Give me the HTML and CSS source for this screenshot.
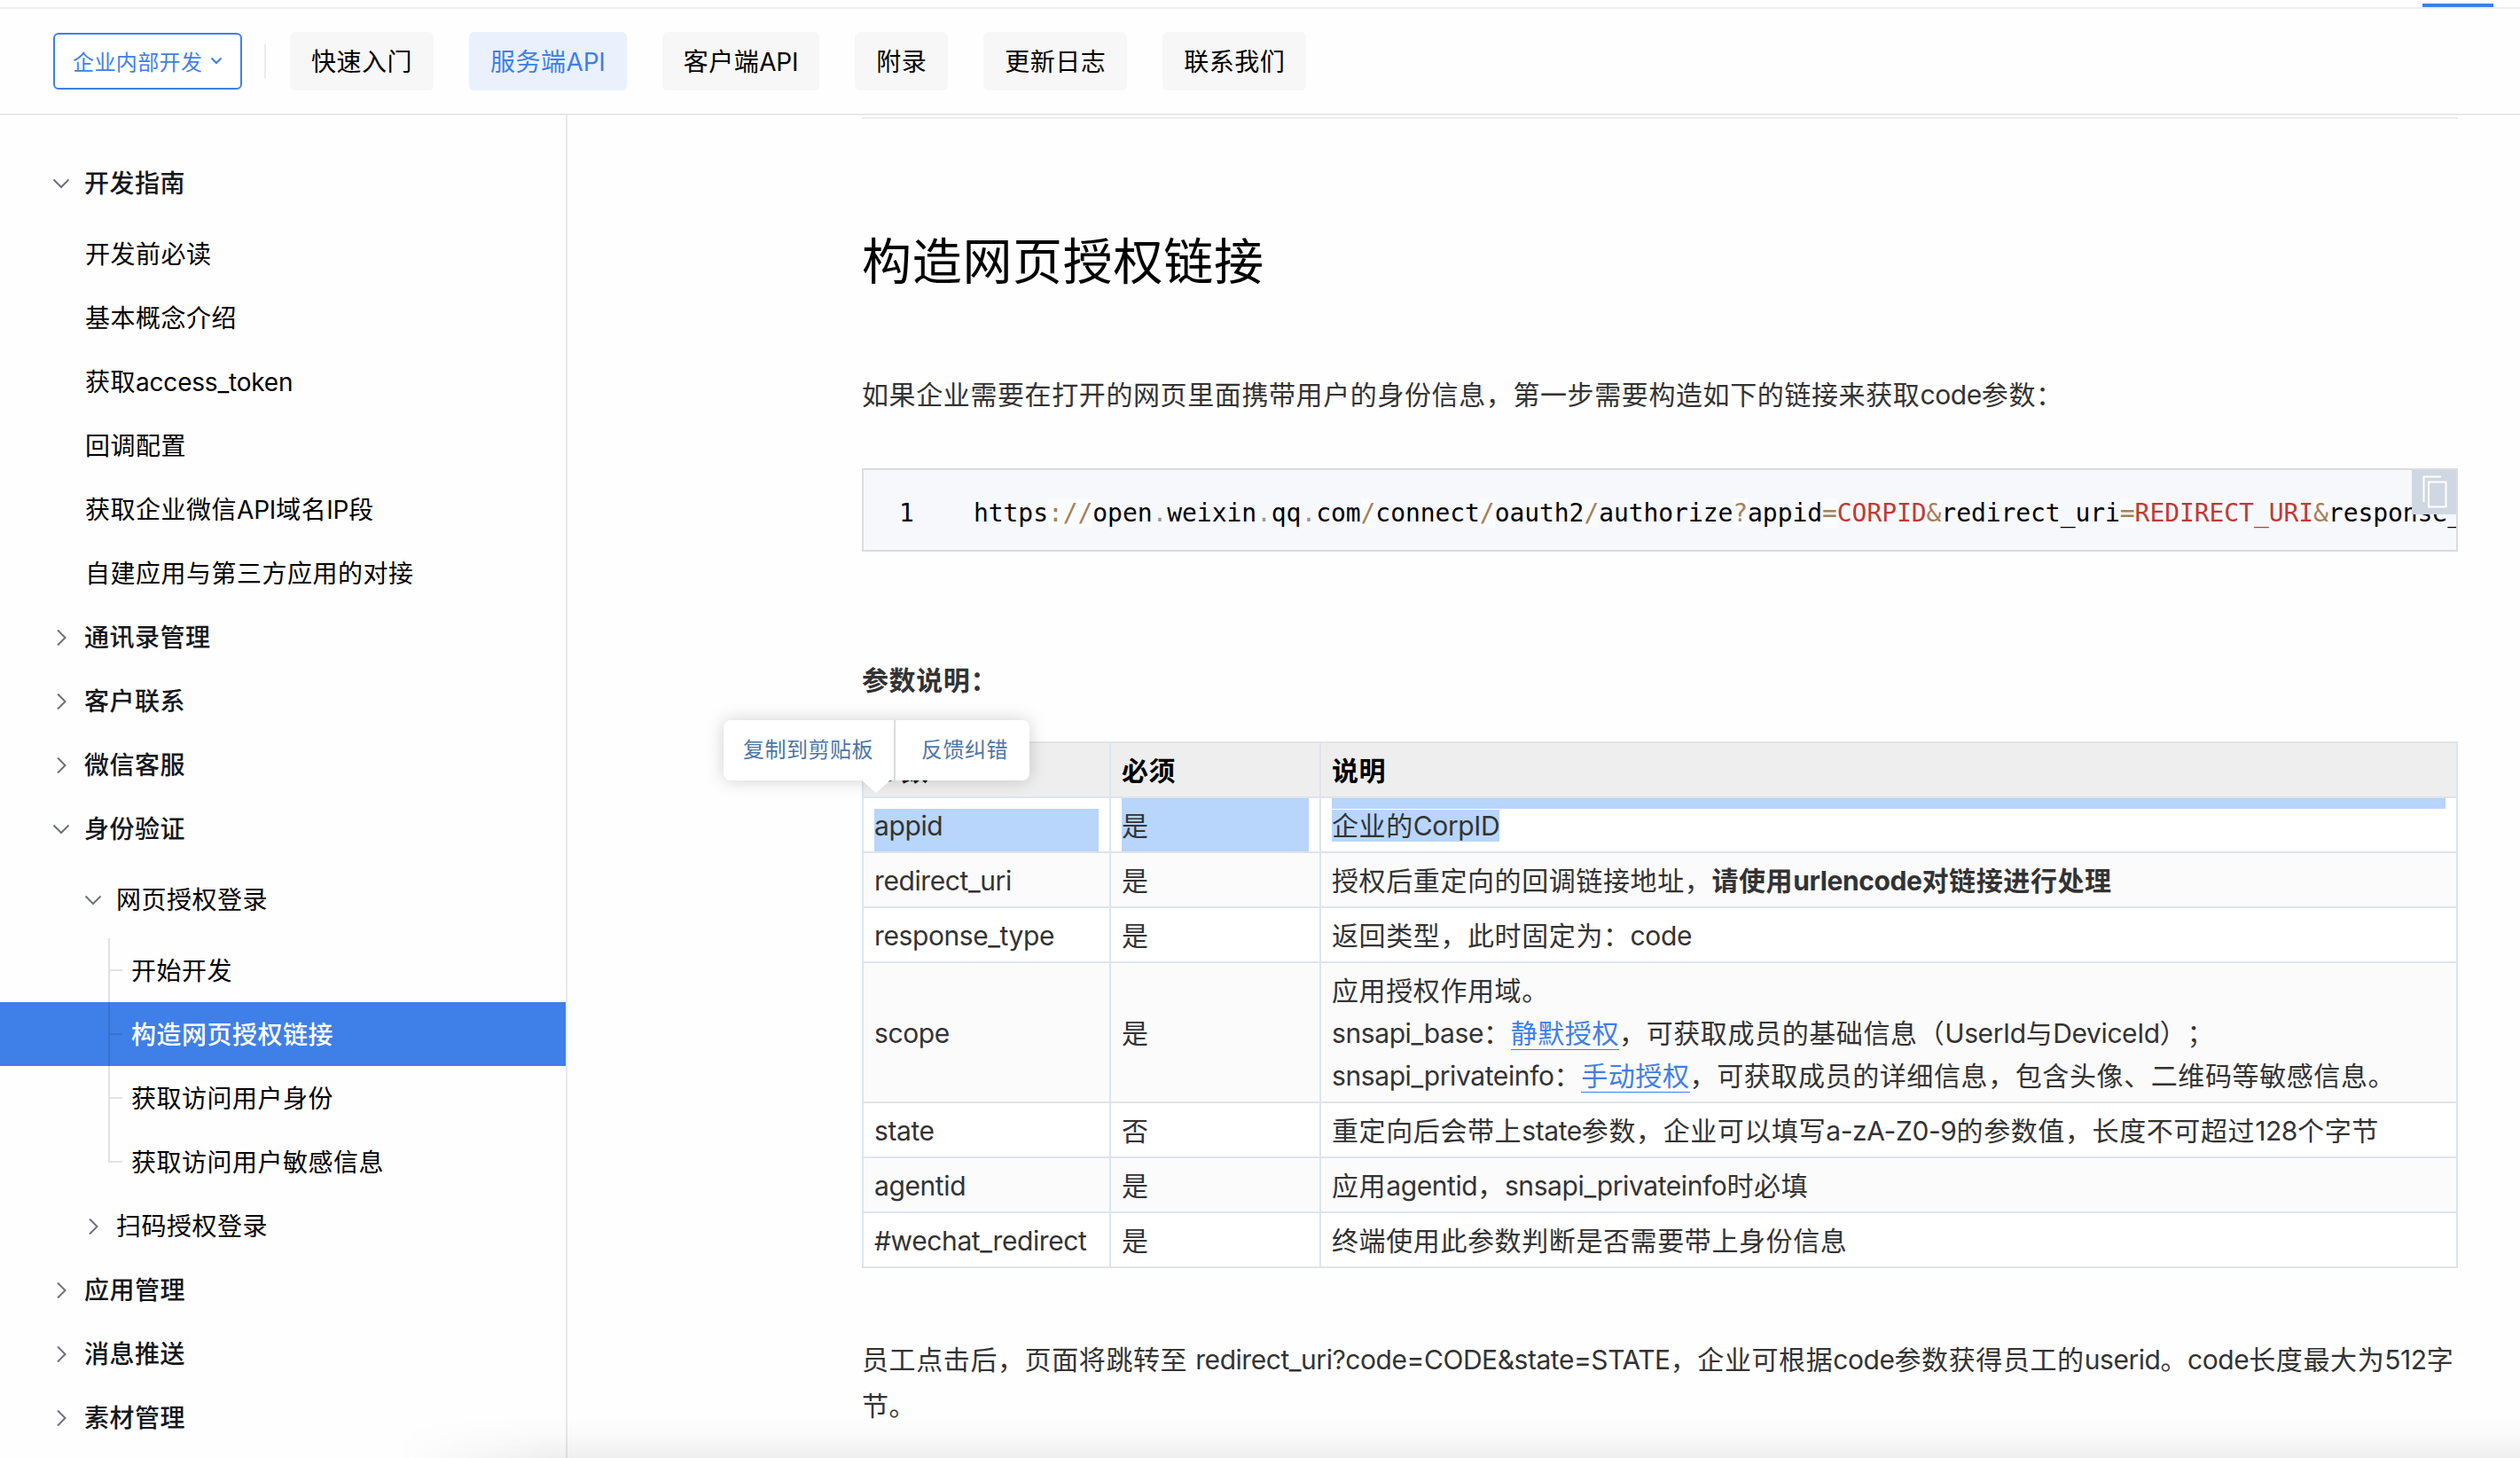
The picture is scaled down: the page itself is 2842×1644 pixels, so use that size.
FILE: index.html
```html
<!DOCTYPE html>
<html lang="zh-CN">
<head>
  <meta charset="UTF-8">
  <meta name="viewport" content="width=device-width, initial-scale=1.0">
  <title>构造网页授权链接</title>
  <link rel="stylesheet" href="styles.css">
</head>
<body>
  <div class="topbar"><span class="topbar-active"></span></div>

  <nav class="nav">
    <button class="nav-select">企业内部开发
      <svg width="14" height="9" viewBox="0 0 14 9"><path d="M1.500 1.500 7 7l5.500-5.500"/></svg>
    </button>
    <span class="nav-divider"></span>
    <a class="nav-item">快速入门</a>
    <a class="nav-item active">服务端<span class="en">API</span></a>
    <a class="nav-item">客户端<span class="en">API</span></a>
    <a class="nav-item">附录</a>
    <a class="nav-item">更新日志</a>
    <a class="nav-item">联系我们</a>
  </nav>

  <div class="main">
    <aside class="sidebar">
      <div class="menu-title open"><svg class="arrow" viewBox="0 0 20 20"><path d="M1.500 5.500 10 14l8.500-8.500"/></svg>开发指南</div>
      <div class="menu-item">开发前必读</div>
      <div class="menu-item">基本概念介绍</div>
      <div class="menu-item">获取<span class="en">access_token</span></div>
      <div class="menu-item">回调配置</div>
      <div class="menu-item">获取企业微信<span class="en">API</span>域名<span class="en">IP</span>段</div>
      <div class="menu-item">自建应用与第三方应用的对接</div>
      <div class="menu-title"><svg class="arrow" viewBox="0 0 20 20"><path d="M6 1.500 14.500 10 6 18.500"/></svg>通讯录管理</div>
      <div class="menu-title"><svg class="arrow" viewBox="0 0 20 20"><path d="M6 1.500 14.500 10 6 18.500"/></svg>客户联系</div>
      <div class="menu-title"><svg class="arrow" viewBox="0 0 20 20"><path d="M6 1.500 14.500 10 6 18.500"/></svg>微信客服</div>
      <div class="menu-title open"><svg class="arrow" viewBox="0 0 20 20"><path d="M1.500 5.500 10 14l8.500-8.500"/></svg>身份验证</div>
      <div class="menu-title sub open"><svg class="arrow" viewBox="0 0 20 20"><path d="M1.500 5.500 10 14l8.500-8.500"/></svg>网页授权登录</div>
      <div class="menu-leaf">开始开发</div>
      <div class="menu-leaf active">构造网页授权链接</div>
      <div class="menu-leaf">获取访问用户身份</div>
      <div class="menu-leaf last">获取访问用户敏感信息</div>
      <div class="menu-title sub"><svg class="arrow" viewBox="0 0 20 20"><path d="M6 1.500 14.500 10 6 18.500"/></svg>扫码授权登录</div>
      <div class="menu-title"><svg class="arrow" viewBox="0 0 20 20"><path d="M6 1.500 14.500 10 6 18.500"/></svg>应用管理</div>
      <div class="menu-title"><svg class="arrow" viewBox="0 0 20 20"><path d="M6 1.500 14.500 10 6 18.500"/></svg>消息推送</div>
      <div class="menu-title"><svg class="arrow" viewBox="0 0 20 20"><path d="M6 1.500 14.500 10 6 18.500"/></svg>素材管理</div>
    </aside>

    <article class="content">
      <h1>构造网页授权链接</h1>
      <p class="intro">如果企业需要在打开的网页里面携带用户的身份信息，第一步需要构造如下的链接来获取<span class="en">code</span>参数：</p>

      <div class="code">
        <span class="line-no">1</span>
        <code>https<i>://</i>open<b>.</b>weixin<b>.</b>qq<b>.</b>com<i>/</i>connect<i>/</i>oauth2<i>/</i>authorize<i>?</i>appid<i>=</i><em>CORPID</em><i>&amp;</i>redirect_uri<i>=</i><em>REDIRECT_URI</em><i>&amp;</i>response_type</code>
        <span class="copy">
          <svg width="28" height="37" viewBox="0 0 28 37"><path d="M21 1.500H1.500V30M7 7.500h19.500v28H7z"/></svg>
        </span>
      </div>

      <p class="label">参数说明：</p>

      <div class="table-wrap">
        <table>
          <colgroup><col class="col-name"><col class="col-must"><col></colgroup>
          <tr><th>参数</th><th>必须</th><th>说明</th></tr>
          <tr><td><div class="sel-name"><span class="en">appid</span></div></td><td><div class="sel-must">是</div></td><td><div class="sel-desc"><mark>企业的<span class="en">CorpID</span></mark></div></td></tr>
          <tr><td><span class="en">redirect_uri</span></td><td>是</td><td>授权后重定向的回调链接地址，<strong>请使用<span class="en">urlencode</span>对链接进行处理</strong></td></tr>
          <tr><td><span class="en">response_type</span></td><td>是</td><td>返回类型，此时固定为：<span class="en">code</span></td></tr>
          <tr><td><span class="en">scope</span></td><td>是</td><td>应用授权作用域。<br><span class="en">snsapi_base</span>：<a>静默授权</a>，可获取成员的基础信息（<span class="en">UserId</span>与<span class="en">DeviceId</span>）；<br><span class="en">snsapi_privateinfo</span>：<a>手动授权</a>，可获取成员的详细信息，包含头像、二维码等敏感信息。</td></tr>
          <tr><td><span class="en">state</span></td><td>否</td><td>重定向后会带上<span class="en">state</span>参数，企业可以填写<span class="en">a-zA-Z0-9</span>的参数值，长度不可超过<span class="en">128</span>个字节</td></tr>
          <tr><td><span class="en">agentid</span></td><td>是</td><td>应用<span class="en">agentid</span>，<span class="en">snsapi_privateinfo</span>时必填</td></tr>
          <tr><td><span class="en">#wechat_redirect</span></td><td>是</td><td>终端使用此参数判断是否需要带上身份信息</td></tr>
        </table>
        <div class="popover">
          <span>复制到剪贴板</span>
          <span>反馈纠错</span>
        </div>
      </div>

      <p class="outro">员工点击后，页面将跳转至 <span class="en">redirect_uri?code=CODE&amp;state=STATE</span>，企业可根据<span class="en">code</span>参数获得员工的<span class="en">userid</span>。<span class="en">code</span>长度最大为<span class="en">512</span>字节。</p>
    </article>
  </div>
  <div class="bottom-shade"></div>
</body>
</html>
```
FILE: styles.css
```css
* {
  box-sizing: border-box;
}

body {
  margin: 0;
  height: 1644px;
  overflow: hidden;
  position: relative;
  background: #fefefe;
  color: #000;
  font-family: Inter, "Noto Sans CJK SC", sans-serif;
  font-size: 28px;
  letter-spacing: 0.5px;
  text-spacing-trim: space-all;
}

svg {
  fill: none;
  stroke: currentColor;
  stroke-width: 2;
}

.en {
  letter-spacing: -0.2px;
}

.topbar {
  height: 10px;
  border-bottom: 2px solid #ededed;
  display: flex;
  justify-content: flex-end;
  align-items: flex-end;
  padding-right: 30px;
}

.topbar-active {
  width: 80px;
  height: 4px;
  background: #3f7fe8;
}

.nav {
  height: 120px;
  border-bottom: 2px solid #e8e8e8;
  display: flex;
  align-items: center;
  padding-left: 60px;
}

.nav-select {
  width: 213px;
  height: 64px;
  border: 2px solid #3f7fe8;
  border-radius: 6px;
  background: #fff;
  color: #3f7fe8;
  font: inherit;
  font-size: 24px;
  letter-spacing: 0.4px;
  padding: 0 20px 2px;
  display: flex;
  align-items: center;
  justify-content: space-between;
  white-space: nowrap;
}

.nav-divider {
  width: 2px;
  height: 38px;
  background: #ebebeb;
  margin: 0 27px 0 25px;
}

.nav-item {
  height: 66px;
  line-height: 69px;
  padding: 0 24px;
  margin-right: 40px;
  border-radius: 6px;
  background: #f7f7f7;
  white-space: nowrap;
}

.nav-item.active {
  background: #eaf1fd;
  color: #3f7fe8;
}

.main {
  display: flex;
}

.sidebar {
  width: 640px;
  height: 1514px;
  border-right: 2px solid #e8e8e8;
  padding-top: 40px;
  flex-shrink: 0;
}

.menu-title,
.menu-item,
.menu-leaf {
  height: 72px;
  line-height: 74px;
  white-space: nowrap;
}

.menu-title {
  display: flex;
  align-items: center;
  gap: 16px;
  padding: 2px 0 0 59px;
  line-height: 40px;
  font-weight: 500;
  color: #14171c;
}

.menu-title.sub {
  padding-left: 95px;
  font-weight: 400;
  color: #000;
}

.menu-title.open {
  margin-bottom: 8px;
}

.arrow {
  width: 20px;
  height: 20px;
  color: #6e7178;
}

.menu-item {
  padding-left: 96px;
}

/* leaf rows carry the tree guide line */
.menu-leaf {
  padding-left: 148px;
  background-image: linear-gradient(rgba(0, 0, 0, 0.11), rgba(0, 0, 0, 0.11)), linear-gradient(rgba(0, 0, 0, 0.11), rgba(0, 0, 0, 0.11));
  background-size: 2px 72px, 14px 2px;
  background-position: 122px 0, 124px 35px;
  background-repeat: no-repeat;
}

.menu-leaf.last {
  background-size: 2px 37px, 14px 2px;
}

.menu-leaf.active {
  background-color: #3f7fe8;
  color: #fff;
  font-weight: 500;
}

.content {
  width: 1800px;
  margin: 2px 0 0 332px;
  border-top: 2px solid #ececec;
  color: #333;
  font-size: 30px;
  letter-spacing: 0.6px;
}

.content .en {
  letter-spacing: -0.4px;
}

h1 {
  margin: 111px 0 0;
  font-size: 56px;
  font-weight: 400;
  line-height: 100px;
  letter-spacing: 0.7px;
  color: #000;
}

.intro {
  margin: 74px 0 0;
  line-height: 52px;
}

.code {
  height: 94px;
  margin-top: 57px;
  border: 2px solid #dcdcdc;
  background: #f7f8fc;
  position: relative;
  overflow: hidden;
  display: flex;
  align-items: center;
  padding-top: 6px;
  color: #000;
  font: 28px "DejaVu Sans Mono", monospace;
  letter-spacing: -0.07px;
  white-space: nowrap;
}

.line-no {
  width: 124px;
  padding-left: 40px;
  flex-shrink: 0;
}

.code code {
  font: inherit;
}

.code i {
  font-style: normal;
  color: #a67f59;
  background: rgba(255, 255, 255, 0.5);
}

.code b {
  font-weight: 400;
  color: #999;
}

.code em {
  font-style: normal;
  color: #c03a33;
}

.copy {
  position: absolute;
  top: -2px;
  right: -2px;
  width: 52px;
  height: 52px;
  background: #cfd7e2;
  color: #fff;
  padding: 8px 12px;
  display: flex;
}

.label {
  margin: 119px 0 0;
  line-height: 52px;
  font-weight: 600;
}

.table-wrap {
  position: relative;
  margin-top: 43px;
}

table {
  width: 1800px;
  table-layout: fixed;
  border-collapse: collapse;
  line-height: 48px;
  background: #fff;
}

.col-name {
  width: 279px;
}

.col-must {
  width: 237px;
}

th,
td {
  border: 2px solid #dfe4ec;
  padding: 7px 12px 5px;
  text-align: left;
  white-space: nowrap;
}

th {
  background: #eee;
  color: #000;
  font-weight: 600;
}

tr:nth-child(odd) td {
  background: #fbfbfc;
}

td a {
  color: #3f7fe8;
  border-bottom: 1px solid #3f7fe8;
}

/* text selection on the first row */
.sel-name,
.sel-must,
.sel-desc {
  margin: -8px 0 -6px;
  padding: 8px 0 6px;
  height: 62px;
  background: #b8d5fb;
}

.sel-name {
  background: linear-gradient(transparent 13px, #b8d5fb 13px);
}

.sel-desc {
  background: linear-gradient(#b8d5fb 13px, transparent 13px);
}

mark {
  background: #b8d5fb;
  color: inherit;
}

.popover {
  position: absolute;
  left: -156px;
  top: -24px;
  height: 68px;
  display: flex;
  align-items: center;
  background: #fff;
  border-radius: 8px;
  box-shadow: 0 0 20px rgba(0, 0, 0, 0.18);
  color: #4d76a8;
  font-size: 24px;
  letter-spacing: 0.5px;
}

.popover span {
  width: 192px;
  line-height: 68px;
  padding-left: 22px;
  white-space: nowrap;
}

.popover span + span {
  width: 153px;
  padding-left: 29px;
  border-left: 2px solid #dcdcdc;
}

.popover::after {
  content: "";
  position: absolute;
  left: 156px;
  top: 68px;
  border: 16px solid transparent;
  border-top: 14px solid #fff;
  border-bottom: 0;
}

.outro {
  margin: 77px 0 0;
  line-height: 52px;
}

.outro .en {
  letter-spacing: -0.45px;
}

/* soft shadow along the bottom edge, fading out to the left */
.bottom-shade {
  position: absolute;
  left: 450px;
  right: 0;
  bottom: 0;
  height: 46px;
  background: linear-gradient(rgba(0, 0, 0, 0), rgba(0, 0, 0, 0.02) 50%, rgba(0, 0, 0, 0.06));
  mask-image: linear-gradient(80deg, transparent, #000 170px);
}
```
